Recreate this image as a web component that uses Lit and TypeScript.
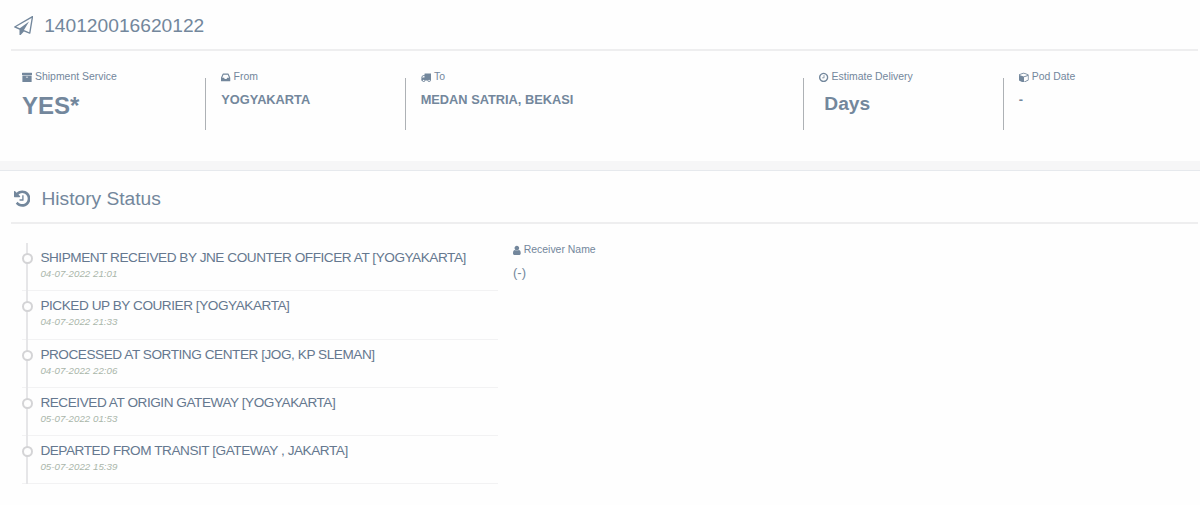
import { LitElement, css, html, svg } from 'lit';
import { customElement, property } from 'lit/decorators.js';

// Icons share one 1792 unit grid, each with its own horizontal crop.
const icons: Record<string, { x: number; width: number; path: string }> = {
  plane: {
    x: 0,
    width: 1792,
    path: 'M1764 11q33 24 27 64l-256 1536q-5 29-32 45-14 8-31 8-11 0-24-5l-527-215-298 327q-18 21-47 21-14 0-23-4-19-7-30-23.500t-11-36.500v-452l-472-193q-37-14-40-55-3-39 32-59l1664-960q35-21 68 2zm-342 1499l221-1323-1434 827 336 137 863-639-478 797z',
  },
  archive: {
    x: 64,
    width: 1664,
    path: 'M1088 832q0-26-19-45t-45-19h-256q-26 0-45 19t-19 45 19 45 45 19h256q26 0 45-19t19-45zm576-192v960q0 26-19 45t-45 19h-1408q-26 0-45-19t-19-45v-960q0-26 19-45t45-19h1408q26 0 45 19t19 45zm64-448v256q0 26-19 45t-45 19h-1536q-26 0-45-19t-19-45v-256q0-26 19-45t45-19h1536q26 0 45 19t19 45z',
  },
  inbox: {
    x: 128,
    width: 1536,
    path: 'M1151 960h316q-1-3-2.500-8.500t-2.500-7.500l-212-496h-708l-212 496q-1 3-2.500 8.500t-2.500 7.500h316l95 192h320zm513 30v482q0 26-19 45t-45 19h-1408q-26 0-45-19t-19-45v-482q0-62 25-123l238-552q10-25 36.500-42t52.500-17h832q26 0 52.500 17t36.500 42l238 552q25 61 25 123z',
  },
  truck: {
    x: 64,
    width: 1728,
    path: 'M640 1408q0-52-38-90t-90-38-90 38-38 90 38 90 90 38 90-38 38-90zm-384-512h384v-256h-158q-13 0-22 9l-195 195q-9 9-9 22v30zm1280 512q0-52-38-90t-90-38-90 38-38 90 38 90 90 38 90-38 38-90zm256-1088v1024q0 15-4 26.500t-13.500 18.500-16.500 11.500-23.500 6-22.500 2-25.500 0-22.500-.5q0 106-75 181t-181 75-181-75-75-181h-384q0 106-75 181t-181 75-181-75-75-181h-64q-3 0-22.500.5t-25.500 0-22.500-2-23.500-6-16.500-11.500-13.500-18.500-4-26.500q0-26 19-45t45-19v-320q0-8-.5-35t0-38 2.500-34.500 6.500-37 14-30.500 22.500-30l198-198q19-19 50.500-32t58.500-13h160v-192q0-26 19-45t45-19h1024q26 0 45 19t19 45z',
  },
  clock: {
    x: 128,
    width: 1536,
    path: 'M1024 544v448q0 14-9 23t-23 9h-320q-14 0-23-9t-9-23v-64q0-14 9-23t23-9h224v-352q0-14 9-23t23-9h64q14 0 23 9t9 23zm416 352q0-148-73-273t-198-198-273-73-273 73-198 198-73 273 73 273 198 198 273 73 273-73 198-198 73-273zm224 0q0 209-103 385.500t-279.500 279.500-385.500 103-385.500-103-279.500-279.500-103-385.500 103-385.500 279.500-279.500 385.500-103 385.500 103 279.500 279.500 103 385.500z',
  },
  cube: {
    x: 64,
    width: 1664,
    path: 'M896 1629l640-349v-636l-640 233v752zm-64-865l698-254-698-254-698 254zm832-252v768q0 35-18 65t-49 47l-704 384q-28 16-61 16t-61-16l-704-384q-31-17-49-47t-18-65v-768q0-40 23-73t61-47l704-256q22-8 44-8t44 8l704 256q38 14 61 47t23 73z',
  },
  history: {
    x: 128,
    width: 1536,
    path: 'M1664 896q0 156-61 298t-164 245-245 164-298 61q-172 0-327-72.500t-264-204.500q-7-10-6.500-22.500t8.500-20.500l137-138q10-9 25-9 16 2 23 12 73 95 179 147t225 52q104 0 198.500-40.500t163.500-109.500 109.500-163.500 40.500-198.500-40.500-198.500-109.500-163.500-163.500-109.500-198.500-40.500q-98 0-188 35.500t-160 101.500l137 138q31 30 14 69-17 40-59 40h-448q-26 0-45-19t-19-45v-448q0-42 40-59 39-17 69 14l130 129q107-101 244.500-156.500t284.500-55.500q156 0 298 61t245 164 164 245 61 298zm-640-288v448q0 14-9 23t-23 9h-320q-14 0-23-9t-9-23v-64q0-14 9-23t23-9h224v-352q0-14 9-23t23-9h64q14 0 23 9t9 23z',
  },
  user: {
    x: 256,
    width: 1280,
    path: 'M1536 1399q0 109-62.500 187t-150.500 78h-854q-88 0-150.500-78t-62.500-187q0-85 8.500-160.500t31.500-152 58.500-131 94-89 134.500-34.500q131 128 313 128t313-128q76 0 134.500 34.500t94 89 58.500 131 31.500 152 8.500 160.500zm-256-887q0 159-112.500 271.500t-271.500 112.500-271.500-112.500-112.500-271.500 112.500-271.500 271.500-112.500 271.500 112.500 112.500 271.500z',
  },
};

@customElement('app-icon')
export class AppIcon extends LitElement {
  static styles = css`
    :host {
      display: inline-flex;
    }
    svg {
      display: block;
      height: 1em;
      fill: currentColor;
    }
  `;

  @property()
  name = '';

  render() {
    const icon = icons[this.name];
    return html`
      <svg viewBox="${icon.x} 0 ${icon.width} 1792">
        ${svg`<path d=${icon.path}></path>`}
      </svg>
    `;
  }
}

@customElement('app-field')
export class AppField extends LitElement {
  static styles = css`
    :host {
      display: block;
    }
    .label {
      display: flex;
      align-items: center;
      gap: 3px;
      height: 14px;
      font-size: 10.45px;
      line-height: 14px;
      white-space: nowrap;
    }
    app-icon {
      font-size: 10.8px;
    }
  `;

  @property()
  icon = '';

  @property()
  label = '';

  render() {
    return html`
      <div class="label">
        <app-icon name=${this.icon}></app-icon>
        <span>${this.label}</span>
      </div>
      <slot></slot>
    `;
  }
}

@customElement('app-root')
export class AppRoot extends LitElement {
  static styles = css`
    :host {
      display: block;
      box-sizing: border-box;
      height: 505px;
      overflow: hidden;
      background: #fefefe;
      color: #73879c;
      font-family: 'Liberation Sans', Arial, sans-serif;
    }
    .shipment {
      box-sizing: border-box;
      height: 161px;
    }
    .band {
      box-sizing: border-box;
      height: 10px;
      background: #f6f6f7;
      border-bottom: 1px solid #e6e9ed;
    }
    .title {
      display: flex;
      align-items: center;
      box-sizing: border-box;
      height: 51px;
      margin: 0 2px 0 11px;
      padding: 2px 0 0 3px;
      border-bottom: 2px solid #eeeeef;
      font-size: 19.2px;
      font-weight: 400;
    }
    .number {
      gap: 11px;
    }
    .history {
      height: 53px;
      gap: 11px;
      padding-top: 4px;
    }
    .fields {
      display: grid;
      grid-template-columns: 1fr 1fr 2fr 1fr 1fr;
      padding: 27px 0 0 6px;
      width: 1196px;
    }
    .cell {
      box-sizing: border-box;
      height: 52px;
      border-left: 1px solid #adb1b5;
      padding-left: 15px;
    }
    .cell:first-child {
      border-color: transparent;
    }
    .cell app-field {
      margin-top: -8px;
    }
    .value {
      font-size: 12.8px;
      font-weight: 700;
      line-height: 16px;
      margin-top: 8px;
    }
    .large {
      font-size: 24px;
      line-height: 28px;
      margin-top: 8px;
    }
    .medium {
      font-size: 19.2px;
      line-height: 22px;
      margin-top: 9px;
      padding-left: 5px;
    }
    .body {
      display: flex;
      align-items: flex-start;
      padding: 19px 0 0 22px;
    }
    .timeline {
      list-style: none;
      width: 476px;
      margin: 0 15px 0 0;
      padding: 0;
    }
    .event {
      position: relative;
      box-sizing: border-box;
      height: 48.3px;
      padding: 6px 0 0 18.4px;
      border-bottom: 1px solid #f2f2f3;
    }
    .event::before {
      content: '';
      position: absolute;
      left: 4px;
      top: 0;
      bottom: -1px;
      width: 2px;
      background: #e6e6e8;
    }
    .dot {
      position: absolute;
      left: 0;
      top: 10px;
      box-sizing: border-box;
      width: 11px;
      height: 11px;
      border: 2px solid #d4d4d6;
      border-radius: 50%;
      background: #fefefe;
    }
    .event-name {
      color: #65788f;
      font-size: 13.6px;
      letter-spacing: -0.45px;
      line-height: 17px;
      white-space: nowrap;
    }
    .date {
      color: #aab6aa;
      font-size: 9.75px;
      font-style: italic;
      line-height: 13px;
      margin-top: 1px;
    }
    .receiver-name {
      font-size: 13px;
      line-height: 16px;
      margin-top: 8px;
    }
  `;

  private events = [
    { name: 'SHIPMENT RECEIVED BY JNE COUNTER OFFICER AT [YOGYAKARTA]', date: '04-07-2022 21:01' },
    { name: 'PICKED UP BY COURIER [YOGYAKARTA]', date: '04-07-2022 21:33' },
    { name: 'PROCESSED AT SORTING CENTER [JOG, KP SLEMAN]', date: '04-07-2022 22:06' },
    { name: 'RECEIVED AT ORIGIN GATEWAY [YOGYAKARTA]', date: '05-07-2022 01:53' },
    { name: 'DEPARTED FROM TRANSIT [GATEWAY , JAKARTA]', date: '05-07-2022 15:39' },
  ];

  private fields = [
    { icon: 'archive', label: 'Shipment Service', value: 'YES*', size: 'large' },
    { icon: 'inbox', label: 'From', value: 'YOGYAKARTA', size: '' },
    { icon: 'truck', label: 'To', value: 'MEDAN SATRIA, BEKASI', size: '' },
    { icon: 'clock', label: 'Estimate Delivery', value: 'Days', size: 'medium' },
    { icon: 'cube', label: 'Pod Date', value: '-', size: '' },
  ];

  render() {
    return html`
      <section class="shipment">
        <div class="title number">
          <app-icon name="plane"></app-icon>
          <span>140120016620122</span>
        </div>
        <div class="fields">
          ${this.fields.map((field) => html`
            <div class="cell">
              <app-field icon=${field.icon} label=${field.label}>
                <div class="value ${field.size}">${field.value}</div>
              </app-field>
            </div>
          `)}
        </div>
      </section>
      <div class="band"></div>
      <section>
        <div class="title history">
          <app-icon name="history"></app-icon>
          <span>History Status</span>
        </div>
        <div class="body">
          <ul class="timeline">
            ${this.events.map((event) => html`
              <li class="event">
                <span class="dot"></span>
                <div class="event-name">${event.name}</div>
                <div class="date">${event.date}</div>
              </li>
            `)}
          </ul>
          <app-field icon="user" label="Receiver Name">
            <div class="receiver-name">(-)</div>
          </app-field>
        </div>
      </section>
    `;
  }
}
